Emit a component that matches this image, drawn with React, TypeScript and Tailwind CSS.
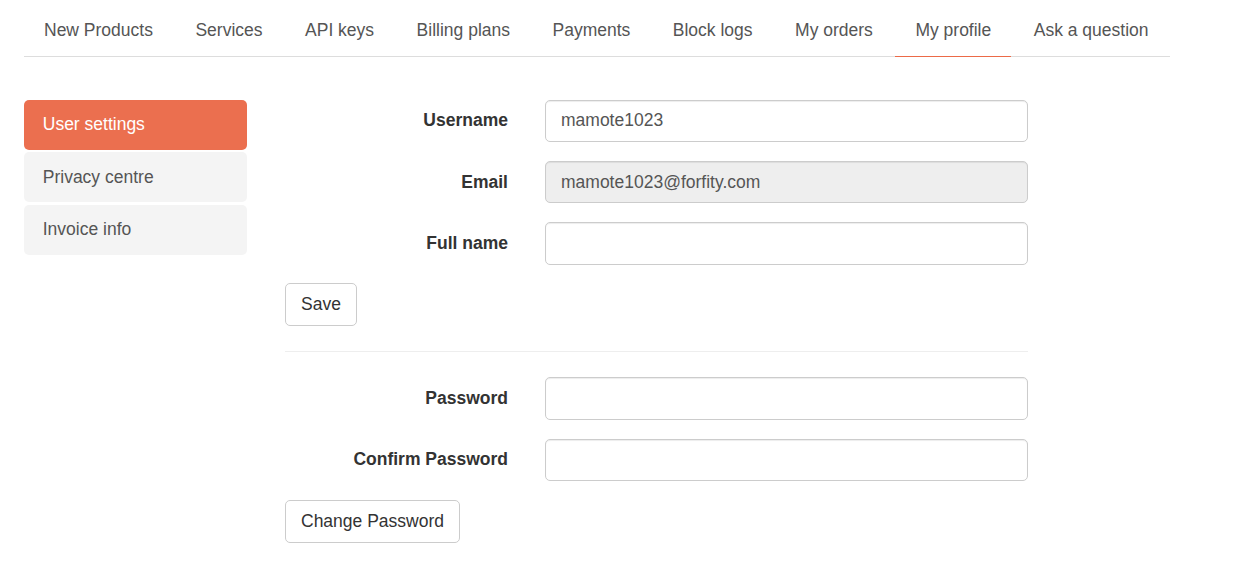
import React, { useState } from 'react';

const tabs = [
    'New Products',
    'Services',
    'API keys',
    'Billing plans',
    'Payments',
    'Block logs',
    'My orders',
    'My profile',
    'Ask a question',
];

const sideLinks = ['User settings', 'Privacy centre', 'Invoice info'];

const FormRow: React.FC<{ label: string; value?: string; disabled?: boolean; type?: string }> = ({
    label,
    value = '',
    disabled = false,
    type = 'text',
}) => (
    <div className="flex items-center gap-[37px] mb-[18.75px]">
        <label className="w-[223px] text-right font-bold text-[#333]">{label}</label>
        <input
            type={type}
            defaultValue={value}
            disabled={disabled}
            className={`w-[483px] h-[42.5px] px-[15px] border border-[#ccc] rounded-[5px] text-[#555] outline-none shadow-[inset_0_1px_1px_rgba(0,0,0,0.075)] ${
                disabled ? 'bg-[#eee]' : 'bg-white'
            }`}
        />
    </div>
);

const App: React.FC = () => {
    const [activeTab, setActiveTab] = useState('My profile');
    const [activeLink, setActiveLink] = useState('User settings');

    return (
        <div
            className="min-h-screen bg-white pl-[24px] text-[17.5px] leading-[25px] text-[#555]"
            style={{ fontFamily: '"Liberation Sans", Arial, sans-serif' }}
        >
            <ul className="flex w-[1146px] mt-[5px] border-b border-[#ddd]">
                {tabs.map(tab => (
                    <li
                        key={tab}
                        onClick={() => setActiveTab(tab)}
                        className={`shrink-0 whitespace-nowrap mr-[2.5px] -mb-px px-[20px] pt-[13px] pb-[12.5px] border-b cursor-pointer ${
                            activeTab === tab ? 'border-b-[#ec6a48]' : 'border-b-transparent'
                        }`}
                    >
                        {tab}
                    </li>
                ))}
            </ul>

            <div className="flex gap-[38px] mt-[43px]">
                <ul className="w-[223px] flex flex-col gap-[2.5px]">
                    {sideLinks.map(link => (
                        <li
                            key={link}
                            onClick={() => setActiveLink(link)}
                            className={`px-[18.75px] py-[12.5px] rounded-[5px] cursor-pointer ${
                                activeLink === link ? 'bg-[#eb6f4f] text-white' : 'bg-[#f4f4f4] text-[#555]'
                            }`}
                        >
                            {link}
                        </li>
                    ))}
                </ul>

                <div className="w-[743px]">
                    <FormRow label="Username" value="mamote1023" />
                    <FormRow label="Email" value="mamote1023@forfity.com" disabled />
                    <FormRow label="Full name" />
                    <button className="h-[43px] px-[15px] border border-[#ccc] rounded-[5px] bg-white text-[#333]">
                        Save
                    </button>

                    <hr className="my-[25px] border-t border-[#eee]" />

                    <FormRow label="Password" type="password" />
                    <FormRow label="Confirm Password" type="password" />
                    <button className="h-[43px] px-[15px] border border-[#ccc] rounded-[5px] bg-white text-[#333]">
                        Change Password
                    </button>
                </div>
            </div>
        </div>
    );
};

export default App;
